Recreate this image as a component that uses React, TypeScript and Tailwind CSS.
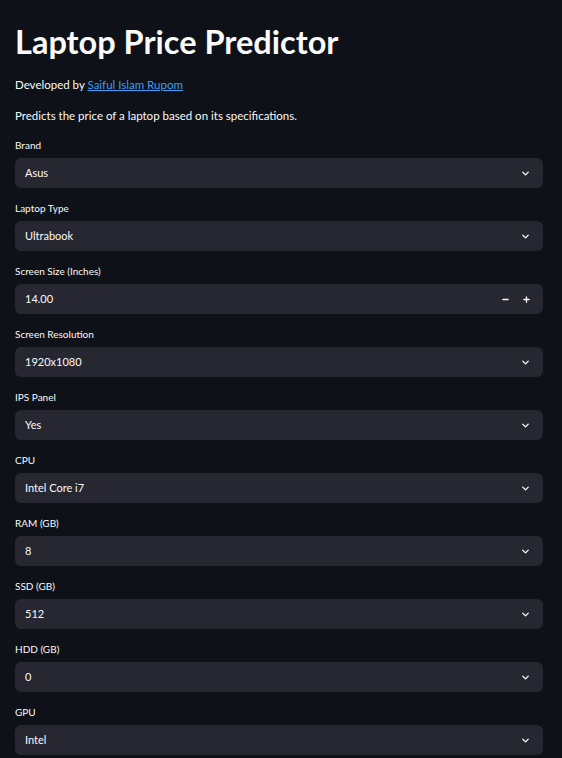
import { ChevronDown, Minus, Plus } from "lucide-react"

const fields = [
  { label: "Brand", value: "Asus" },
  { label: "Laptop Type", value: "Ultrabook" },
  { label: "Screen Size (Inches)", value: "14.00", number: true },
  { label: "Screen Resolution", value: "1920x1080" },
  { label: "IPS Panel", value: "Yes" },
  { label: "CPU", value: "Intel Core i7" },
  { label: "RAM (GB)", value: "8" },
  { label: "SSD (GB)", value: "512" },
  { label: "HDD (GB)", value: "0" },
  { label: "GPU", value: "Intel" },
]

function Field({ label, value, number }: { label: string; value: string; number?: boolean }) {
  return (
    <div className="flex flex-col">
      <label className="text-[10px] leading-[14px] text-[#fafafa] mb-[6px]">{label}</label>
      <div className="h-[30px] rounded-[6px] bg-[#262730] flex items-center pl-[10px] pr-[12px]">
        <span className="flex-1 text-[11px] text-[#fafafa]">{value}</span>
        {number ? (
          <div className="flex items-center gap-[12px] text-[#fafafa]">
            <Minus className="w-[9px] h-[9px]" strokeWidth={3.5} />
            <Plus className="w-[9px] h-[9px]" strokeWidth={3.5} />
          </div>
        ) : (
          <ChevronDown className="w-[11px] h-[11px] text-[#fafafa]" strokeWidth={3} />
        )}
      </div>
    </div>
  )
}

export default function App() {
  return (
    <div className="min-h-[758px] bg-[#0e1117] text-[#fafafa]" style={{ fontFamily: "Lato, 'Noto Sans', sans-serif" }}>
      <div className="pl-[15px] pr-[19px] pt-[22px]">
        <h1 className="text-[32.5px] leading-[40px] font-bold text-[#fafafa]">Laptop Price Predictor</h1>
        <p className="mt-[15px] text-[11.5px] leading-[16px]">
          Developed by{" "}
          <a href="#" className="text-[#3d9df3] underline">
            Saiful Islam Rupom
          </a>
        </p>
        <p className="mt-[15px] text-[11.5px] leading-[16px]">Predicts the price of a laptop based on its specifications.</p>
        <div className="mt-[14px] flex flex-col gap-[13px]">
          {fields.map((f) => (
            <Field key={f.label} {...f} />
          ))}
        </div>
      </div>
    </div>
  )
}
